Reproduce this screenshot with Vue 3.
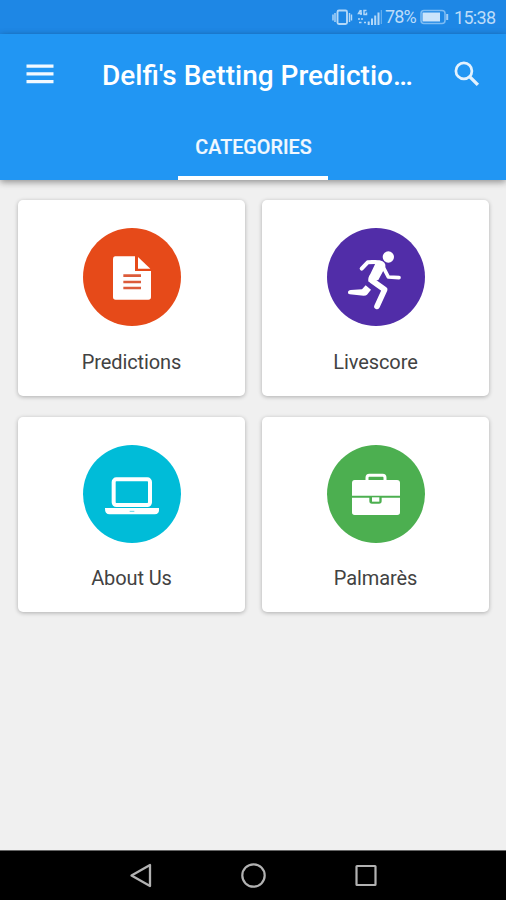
<script setup>
const categories = [
  { id: 'predictions', label: 'Predictions', color: '#e64a19', box: '39 40 294 294' },
  { id: 'livescore', label: 'Livescore', color: '#512da8', box: '34 40 294 294' },
  { id: 'about', label: 'About Us', color: '#00bcd8', box: '39 30 294 294' },
  { id: 'palmares', label: 'Palmarès', color: '#4caf50', box: '34 30 294 294' },
]
</script>

<template>
  <div class="screen">
    <div class="status">
      <svg class="status-icons" width="50" height="20" viewBox="0 0 50 20" fill="none" stroke="#b3d8f8">
        <rect x="5.500" y="3.500" width="9.500" height="13.500" rx="1.500" stroke-width="1.900" />
        <path d="M3 6v9M17.500 6v9M1 7.500v6M19.500 7.500v6" stroke-width="1.400" />
        <path d="M28.500 3l-2 3.500h3.500M29 3v5M34.500 3.500h-2.500v4h2.500V5.500M27 11v2M30 11v2M27 15.500h2.500M32 15.500h2" stroke-width="1.500" />
        <path d="M36.700 18v-3.500M40 18v-6.500M43.200 18V8.500M46.500 18V5.500" stroke-width="2" />
        <path d="M49.300 3v14" stroke-width=".6" />
      </svg>
      <span class="percent">78%</span>
      <svg class="battery" width="29" height="16" viewBox="0 0 29 16">
        <rect x="1" y="1.500" width="24" height="13" rx="3" fill="none" stroke="#7dbcf4" stroke-width="1.500" />
        <rect x="2.500" y="3.500" width="17.500" height="9" fill="#cbe4fb" />
        <path d="M27.200 5v6" stroke="#9fcdf7" stroke-width="2" />
      </svg>
      <span class="time">15:38</span>
    </div>

    <header class="header">
      <div class="toolbar">
        <svg class="menu" width="28" height="20" viewBox="0 0 28 20" fill="#f2f9ff">
          <path d="M.5.500h27v3.300H.500zM.500 8.200h27v3.300H.500zM.500 15.900h27v3.300H.500z" />
        </svg>
        <h1 class="title">Delfi's Betting Predictio…</h1>
        <svg class="search" width="26" height="26" viewBox="0 0 26 26" fill="none" stroke="#e3f2fe">
          <circle cx="9.900" cy="9.900" r="8" stroke-width="2.700" />
          <path d="M15.600 15.600l8.300 8.300" stroke-width="3.400" />
        </svg>
      </div>
      <nav class="tabs">
        <div class="tab">CATEGORIES</div>
      </nav>
    </header>

    <main class="grid">
      <section v-for="c in categories" :key="c.id" class="card">
        <div class="disc" :style="{ background: c.color }">
          <svg width="98" height="98" :viewBox="c.box" fill="#fff">
            <template v-if="c.id === 'predictions'">
              <path d="M135 125H195V169H243V247Q243 255 235 255H137Q129 255 129 247V133Q129 125 135 125Z" />
              <path d="M204 127L241 162H204Z" />
              <path d="M160 183H213M160 202H213M160 220H213" stroke="#dc5b3a" stroke-width="8" />
            </template>
            <template v-else-if="c.id === 'livescore'">
              <circle cx="218" cy="127" r="17" />
              <path d="M138 162L156 143L178 142" fill="none" stroke="#fff" stroke-width="12" stroke-linecap="round" stroke-linejoin="round" />
              <path d="M203 158L218 187L250 189" fill="none" stroke="#fff" stroke-width="11" stroke-linecap="round" stroke-linejoin="round" />
              <path d="M164 136L192 137Q212 142 209 157L188 196L159 202Q155 190 164 178L178 149Z" />
              <path d="M168 197L207 225L184 275" fill="none" stroke="#fff" stroke-width="17" stroke-linecap="round" stroke-linejoin="round" />
              <path d="M150 212L166 225L154 240Q151 243 144 243L102 239Q95 237 97 231Q99 226 105 226L139 224Z" />
            </template>
            <template v-else-if="c.id === 'about'">
              <rect x="131" y="133" width="109" height="77" rx="8" fill="none" stroke="#fff" stroke-width="12" />
              <path d="M105 219H267Q269 238 254 238H119Q104 238 105 219Z" />
              <path d="M179 229H193" stroke="#65d5e5" stroke-width="3" />
            </template>
            <template v-else>
              <path d="M154 138V128Q154 121 161 121H201Q208 121 208 128V138" fill="none" stroke="#fff" stroke-width="9" />
              <path d="M117 135H244Q253 135 253 144V182H109V144Q109 135 117 135Z" />
              <path d="M109 188H161V198Q161 206 169 206H190Q198 206 198 198V188H253V232Q253 240 245 240H117Q109 240 109 232Z" />
              <path d="M169 187H191V200H169Z" />
            </template>
          </svg>
        </div>
        <div class="label">{{ c.label }}</div>
      </section>
    </main>

    <footer class="navbar">
      <svg width="24" height="26" viewBox="0 0 24 26" fill="none" stroke="#b2b2b2" stroke-width="2.300" stroke-linejoin="round">
        <path d="M2.500 12.500L21 2V23Z" />
      </svg>
      <svg width="26" height="26" viewBox="0 0 26 26" fill="none" stroke="#b2b2b2" stroke-width="2.200">
        <circle cx="13.500" cy="12.500" r="11.200" />
      </svg>
      <svg width="24" height="26" viewBox="0 0 24 26" fill="none" stroke="#b2b2b2" stroke-width="2.200">
        <rect x="2.500" y="3" width="19" height="19" rx=".5" />
      </svg>
    </footer>
  </div>
</template>

<style>
body {
  margin: 0;
}
</style>

<style scoped>
.screen {
  display: flex;
  flex-direction: column;
  width: 506px;
  height: 900px;
  overflow: hidden;
  background: #f0f0f0;
  font-family: Roboto, sans-serif;
}
.status {
  display: flex;
  align-items: center;
  box-sizing: border-box;
  height: 34px;
  padding-left: 332px;
  background: #1e87e5;
  color: #bcdcf9;
  font-size: 18px;
  line-height: 34px;
  white-space: nowrap;
}
.status-icons,
.battery,
.percent,
.time {
  flex: none;
}
.percent {
  width: 35px;
  margin-left: 3px;
  letter-spacing: -0.9px;
}
.time {
  margin-left: 5px;
  padding-top: 1px;
  letter-spacing: -0.7px;
}
.header {
  position: relative;
  height: 146px;
  background: #2196f3;
  box-shadow: 0 2px 7px rgba(0, 0, 0, 0.42);
}
.toolbar {
  display: flex;
  align-items: center;
  height: 80px;
  padding-left: 26px;
}
.title {
  width: 311px;
  margin: 3px 0 0 48px;
  color: #fff;
  font-size: 28px;
  font-weight: 500;
  line-height: 32px;
  white-space: nowrap;
}
.search {
  margin-left: 41px;
}
.tabs {
  display: flex;
  justify-content: center;
  height: 66px;
}
.tab {
  box-sizing: border-box;
  width: 150px;
  padding-left: 1px;
  border-bottom: 4px solid #fff;
  color: #f1f8fe;
  font-size: 19.8px;
  font-weight: 500;
  line-height: 68px;
  text-align: center;
  -webkit-text-stroke: 0.2px #f1f8fe;
}
.grid {
  display: grid;
  grid-template-columns: 227px 227px;
  grid-auto-rows: 195.5px;
  gap: 21px 17px;
  flex: 1;
  align-content: start;
  padding: 20.400px 18px 0;
}
.card {
  display: flex;
  flex-direction: column;
  align-items: center;
  border-radius: 5px;
  background: #fff;
  box-shadow: 0 1px 4px rgba(0, 0, 0, 0.28);
}
.disc {
  width: 98px;
  height: 98px;
  margin-top: 28px;
  border-radius: 50%;
}
.disc svg {
  display: block;
}
.label {
  margin-top: 22.5px;
  color: #424242;
  font-size: 20px;
  line-height: 26px;
  letter-spacing: -0.1px;
}
.navbar {
  display: flex;
  align-items: center;
  justify-content: center;
  gap: 87.5px;
  height: 49px;
  border-top: 1px solid #666;
  background: #000;
}
</style>
